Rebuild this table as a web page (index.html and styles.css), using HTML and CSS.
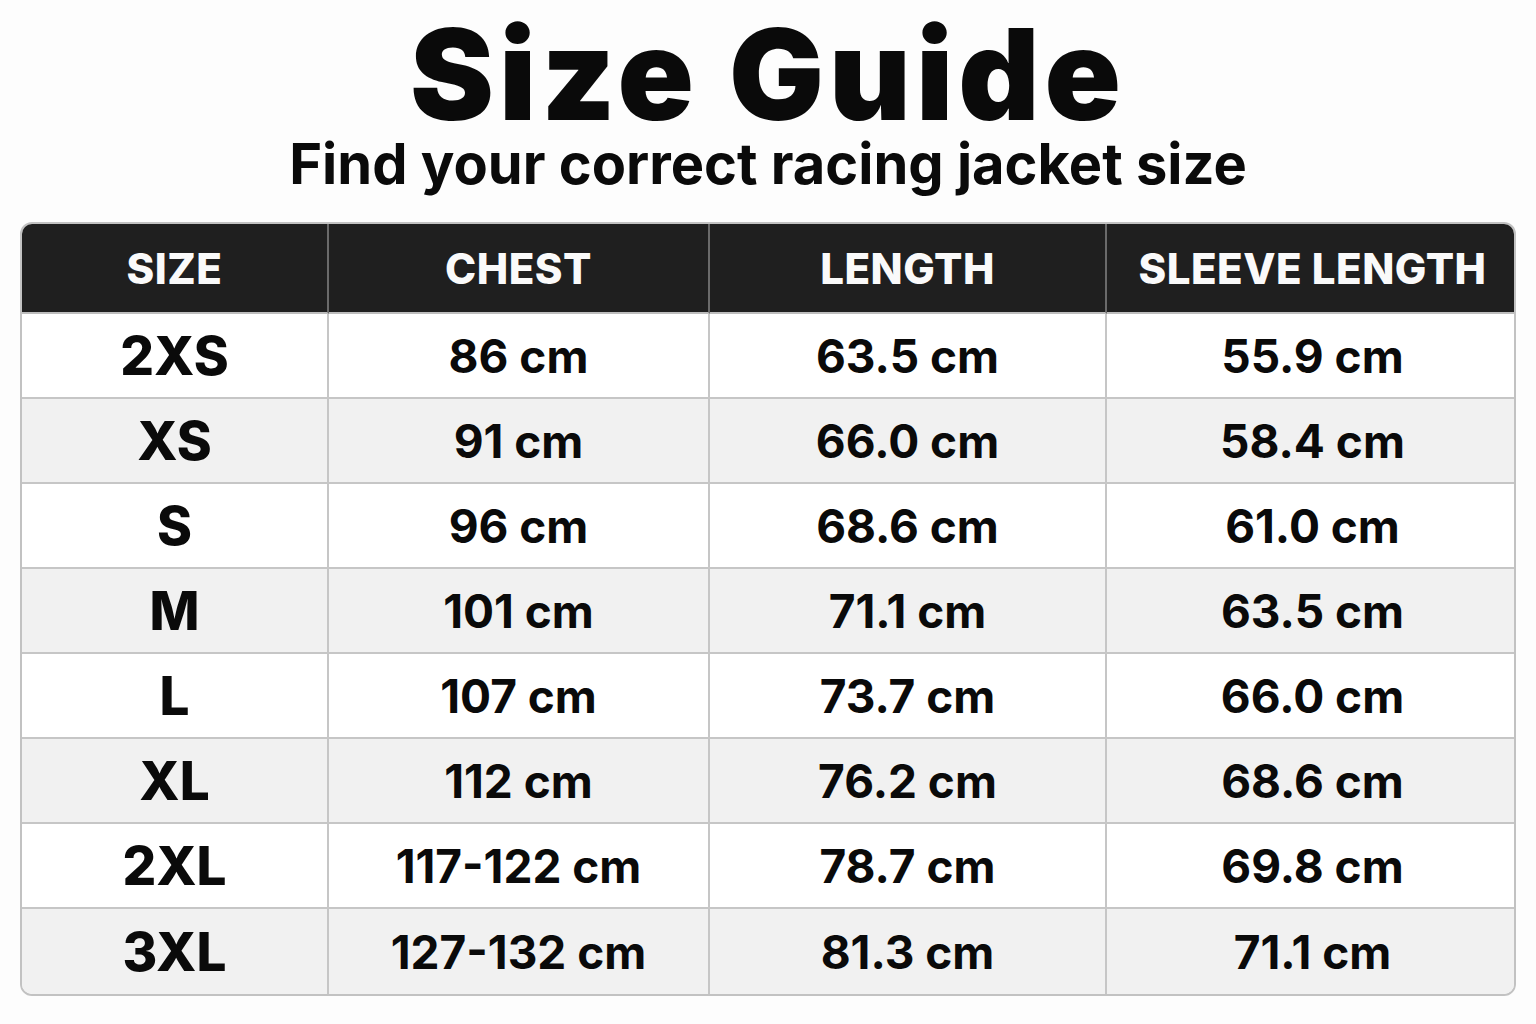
FILE: index.html
```html
<!DOCTYPE html>
<html lang="en">
<head>
<meta charset="utf-8">
<title>Size Guide</title>
<link rel="stylesheet" href="styles.css">
</head>
<body>
<main class="page">
  <header class="intro">
    <h1 class="title">Size Guide</h1>
    <p class="subtitle">Find your correct racing jacket size</p>
  </header>
  <div class="chart">
    <div class="cell head">SIZE</div>
    <div class="cell head">CHEST</div>
    <div class="cell head">LENGTH</div>
    <div class="cell head last">SLEEVE LENGTH</div>

    <div class="cell size">2XS</div><div class="cell">86 cm</div><div class="cell">63.5 cm</div><div class="cell last">55.9 cm</div>
    <div class="cell size alt">XS</div><div class="cell alt">91 cm</div><div class="cell alt">66.0 cm</div><div class="cell alt last">58.4 cm</div>
    <div class="cell size">S</div><div class="cell">96 cm</div><div class="cell">68.6 cm</div><div class="cell last">61.0 cm</div>
    <div class="cell size alt">M</div><div class="cell alt">101 cm</div><div class="cell alt">71.1 cm</div><div class="cell alt last">63.5 cm</div>
    <div class="cell size">L</div><div class="cell">107 cm</div><div class="cell">73.7 cm</div><div class="cell last">66.0 cm</div>
    <div class="cell size alt">XL</div><div class="cell alt">112 cm</div><div class="cell alt">76.2 cm</div><div class="cell alt last">68.6 cm</div>
    <div class="cell size">2XL</div><div class="cell">117-122 cm</div><div class="cell">78.7 cm</div><div class="cell last">69.8 cm</div>
    <div class="cell size alt bottom">3XL</div><div class="cell alt bottom">127-132 cm</div><div class="cell alt bottom">81.3 cm</div><div class="cell alt last bottom">71.1 cm</div>
  </div>
</main>
</body>
</html>
```
FILE: styles.css
```css
html, body {
  margin: 0;
  padding: 0;
  background: #fdfdfd;
}
body {
  font-family: Inter, "Noto Sans", "Liberation Sans", sans-serif;
  color: #0a0a0a;
}
.page {
  width: 1536px;
  height: 1024px;
  padding: 0 20px;
  box-sizing: border-box;
}
.intro {
  text-align: center;
}
.title {
  margin: 0;
  padding-top: 9px;
  font-size: 126px;
  font-weight: 900;
  line-height: 130px;
  letter-spacing: 5px;
}
.subtitle {
  margin: 0;
  font-size: 56px;
  font-weight: 700;
  line-height: 50px;
  letter-spacing: 0;
}
.chart {
  margin-top: 33px;
  display: grid;
  grid-template-columns: 307px 381px 397px 411px;
  grid-template-rows: 90px repeat(8, 85px);
  border: 2px solid #c2c2c2;
  border-radius: 12px;
  overflow: hidden;
  background: #ffffff;
  width: 1496px;
  box-sizing: border-box;
}
.cell {
  display: flex;
  align-items: center;
  justify-content: center;
  border-right: 2px solid #c6c6c6;
  border-bottom: 2px solid #c6c6c6;
  font-size: 46px;
  font-weight: 700;
  background: #ffffff;
}
.cell.alt {
  background: #f1f1f1;
}
.cell.last {
  border-right: none;
}
.cell.bottom {
  border-bottom: none;
}
.head {
  background: #1f1f1f;
  color: #fafafa;
  font-size: 42px;
  font-weight: 800;
  letter-spacing: 0.5px;
  border-right-color: #6a6a6a;
  border-bottom-color: #bdbdbd;
}
.size {
  font-size: 53px;
  font-weight: 800;
}
```
